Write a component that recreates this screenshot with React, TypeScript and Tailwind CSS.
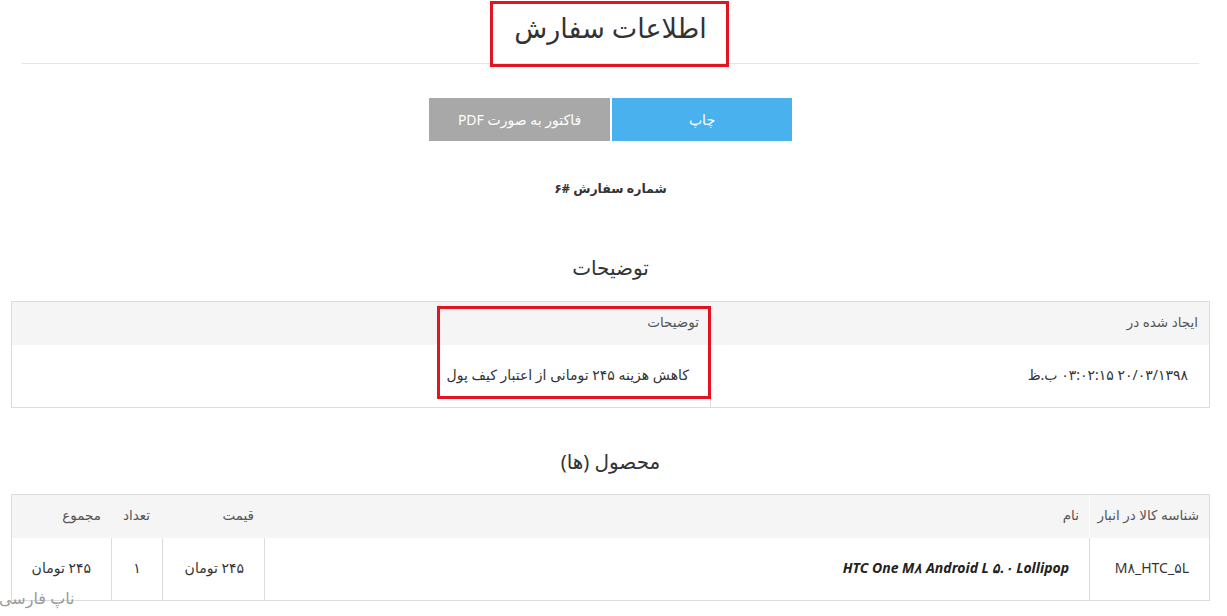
import React from "react";

const font = { fontFamily: "'Noto Sans', 'DejaVu Sans', sans-serif" };

function SectionTitle({ children, className = "" }: { children: React.ReactNode; className?: string }) {
  return <h2 className={`text-center text-[20px] leading-[28px] text-[#333] ${className}`}>{children}</h2>;
}

export default function App() {
  return (
    <div dir="rtl" className="relative w-[1227px] h-[616px] bg-white text-[#333] overflow-hidden" style={font}>
      <div className="w-[1199px] ml-[11px] mr-auto">
        {/* page title */}
        <div className="relative mx-[11px] h-[64px] border-b border-[#e5e5e5] flex items-center justify-center">
          <h1 className="text-[27px] leading-none text-[#333] pb-[8px]">اطلاعات سفارش</h1>
          <div className="absolute left-[468px] top-[1px] w-[239px] h-[66px] border-[3px] border-[#e1141f] pointer-events-none" />
        </div>

        {/* actions */}
        <div className="mt-[34px] flex justify-center gap-[2px]">
          <button className="w-[180px] h-[43px] bg-[#4ab1ef] text-white text-[14px]">چاپ</button>
          <button className="w-[181px] h-[43px] bg-[#a8a8a8] text-white text-[14px]">فاکتور به صورت PDF</button>
        </div>

        <p className="mt-[38px] text-center text-[12.5px] leading-[20px] font-bold text-[#333]">شماره سفارش #۶</p>

        <SectionTitle className="mt-[55px]">توضیحات</SectionTitle>

        {/* notes table */}
        <div className="relative mt-[19px] border border-[#dcdcdc] text-[14px]">
          <div className="flex h-[43px] bg-[#f5f5f5] text-[#555] text-[13.5px]">
            <div className="w-[499px] pr-[11px] pt-[10px]">ایجاد شده در</div>
            <div className="flex-1 pr-[11px] pt-[10px]">توضیحات</div>
          </div>
          <div className="flex h-[62px]">
            <div className="w-[499px] border-l border-[#dcdcdc] pr-[21px] pt-[19px]">۲۰/۰۳/۱۳۹۸ ۰۳:۰۲:۱۵ ب.ظ</div>
            <div className="flex-1 pr-[21px] pt-[19px]">کاهش هزینه ۲۴۵ تومانی از اعتبار کیف پول</div>
          </div>
          <div className="absolute right-[498px] top-[4px] w-[274px] h-[93px] border-[3px] border-[#e1141f] pointer-events-none" />
        </div>

        <SectionTitle className="mt-[40px]">محصول (ها)</SectionTitle>

        {/* products table */}
        <div className="mt-[18px] border border-[#dcdcdc] text-[14px]">
          <div className="flex h-[43px] bg-[#f5f5f5] text-[#555] text-[13.5px]">
            <div className="w-[120px] pr-[10px] pt-[10px] border-l border-white">شناسه کالا در انبار</div>
            <div className="w-[825px] pr-[10px] pt-[10px]">نام</div>
            <div className="w-[102px] pr-[10px] pt-[10px]">قیمت</div>
            <div className="w-[51px] text-center pt-[10px]">تعداد</div>
            <div className="flex-1 pr-[10px] pt-[10px]">مجموع</div>
          </div>
          <div className="flex h-[62px]">
            <div className="w-[120px] border-l border-[#dcdcdc] pr-[20px] pt-[19px]">
              <span dir="ltr">M۸_HTC_۵L</span>
            </div>
            <div className="w-[825px] border-l border-[#dcdcdc] pr-[20px] pt-[19px] font-bold italic text-[#222]">
              <span dir="ltr">HTC One M۸ Android L ۵.۰ Lollipop</span>
            </div>
            <div className="w-[102px] border-l border-[#dcdcdc] pr-[20px] pt-[19px]">۲۴۵ تومان</div>
            <div className="w-[51px] border-l border-[#dcdcdc] text-center pt-[19px]">۱</div>
            <div className="flex-1 pr-[20px] pt-[19px]">۲۴۵ تومان</div>
          </div>
        </div>
      </div>

      {/* watermark */}
      <div className="absolute -left-[1px] top-[586px] text-[16px] text-[#9a9a9a]">ناپ فارسی</div>
    </div>
  );
}
